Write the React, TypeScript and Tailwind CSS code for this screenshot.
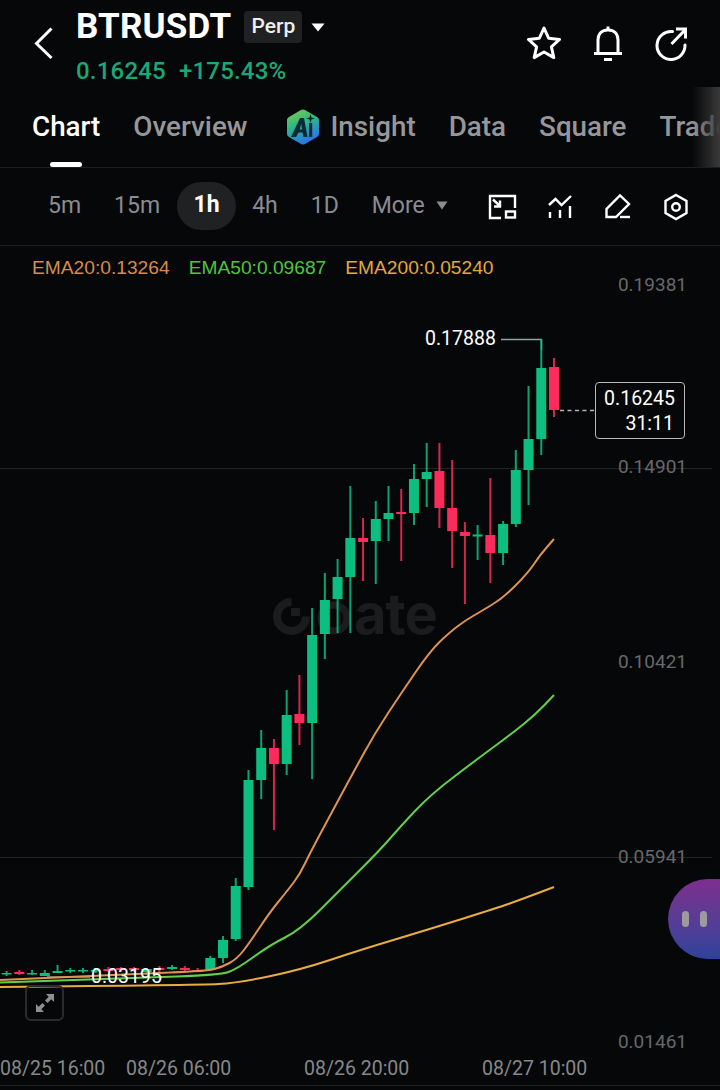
import React from "react";

type C = [number, number, number, number, number]; // x-index k, wickTop, wickBottom, bodyTop, bodyBottom
const G = "#0cbf80";
const R = "#fb2c5b";

const up: C[] = [
  [1, 339, 455, 368, 439], [2, 386, 505, 439, 470], [3, 450, 527, 470, 524], [4, 521, 565, 524, 553],
  [6, 525, 560, 534.5, 536.5], [10, 443, 507, 472, 479], [11, 464, 525, 479, 513], [13, 486, 541, 513, 519],
  [14, 501, 584, 519, 541], [16, 486, 633, 538, 577], [17, 559, 633, 577, 599], [18, 573, 659, 600, 634],
  [19, 608, 779, 635, 723], [21, 690, 775, 715, 764], [23, 730, 799, 748, 780], [24, 770, 890, 780, 887],
  [25, 878, 941, 886, 939], [26, 936, 963, 940, 958], [27, 956, 971, 958, 970],
  [30, 965, 970, 967, 969], [32, 968, 975, 969, 972], [36, 968, 973, 970, 971], [37, 968, 973, 970, 971],
  [38, 968, 973, 970, 971], [39, 965, 973, 971, 973], [40, 970, 976, 973, 976], [41, 970, 975, 973, 974], [43, 971, 976, 973, 974.5],
];
const down: C[] = [
  [0, 358, 417, 367, 410], [5, 478, 583, 535, 553], [7, 522, 604, 532, 536], [8, 460, 568, 508, 531],
  [9, 443, 528, 471, 508], [12, 489, 561, 512, 514], [15, 518, 581, 538, 542], [20, 675, 745, 714, 723],
  [22, 739, 830, 748, 764], [28, 968, 972, 970, 972], [29, 966, 972, 968, 970], [31, 966, 972, 968, 970],
  [33, 967, 972, 968, 970], [34, 967, 972, 968, 970], [35, 967, 972, 969, 971], [42, 970, 975, 972, 974],
];

type P = [number, number];
const ema20: P[] = [[0, 980], [133, 974], [207, 971], [222, 967], [237, 959], [250, 942], [270, 912], [288, 890], [300, 874], [310, 853], [340, 797], [353, 773], [375, 733], [400, 695], [430, 651], [450, 632], [466, 620], [480, 612], [503, 598], [528, 573], [540, 555], [554, 539]];
const ema50: P[] = [[0, 982.5], [133, 978], [220, 975], [237, 969], [270, 945], [300, 930], [340, 890], [380, 850], [400, 827], [430, 795], [480, 757], [510, 735], [535, 715], [554, 695]];
const ema200: P[] = [[0, 987], [200, 985], [237, 983], [300, 970], [360, 950], [430, 929], [500, 907], [525, 898], [554, 887]];

function smooth(p: P[]) {
  let d = `M${p[0][0]} ${p[0][1]}`;
  for (let i = 1; i < p.length - 1; i++) {
    const mx = (p[i][0] + p[i + 1][0]) / 2;
    const my = (p[i][1] + p[i + 1][1]) / 2;
    d += ` Q${p[i][0]} ${p[i][1]} ${mx} ${my}`;
  }
  const l = p[p.length - 1];
  return d + ` L${l[0]} ${l[1]}`;
}

function Candle({ c, color }: { c: C; color: string }) {
  const x = 554 - c[0] * 12.73;
  return (
    <g fill={color}>
      <rect x={x - 1} y={c[1]} width={2} height={c[2] - c[1]} opacity={0.85} />
      <rect x={x - 5} y={c[3]} width={10} height={Math.max(c[4] - c[3], 1.5)} />
    </g>
  );
}

function AiLogo() {
  return (
    <svg width="34" height="38" viewBox="0 0 34 38" className="shrink-0">
      <defs>
        <linearGradient id="aig" x1="0" y1="0" x2="0.4" y2="1">
          <stop offset="0" stopColor="#7fd03f" />
          <stop offset="0.5" stopColor="#2fb68a" />
          <stop offset="1" stopColor="#2a78e8" />
        </linearGradient>
      </defs>
      <path d="M15 2 Q17 1 19 2 L31 9 Q33 10 33 12 L33 26 Q33 28 31 29 L19 36 Q17 37 15 36 L3 29 Q1 28 1 26 L1 12 Q1 10 3 9 Z" fill="url(#aig)" />
      <path d="M5 29 L14 10 H18 L21.5 29 H17.5 L16.5 24.5 H12.5 L10 29 Z M13.8 21.5 H16 L15.2 15.5 Z" fill="#0a2a33" fillRule="evenodd" />
      <rect x="23" y="15" width="3.2" height="14" fill="#0a2a33" />
      <path d="M24.5 6 L25.5 9.5 L29 10.5 L25.5 11.5 L24.5 15 L23.5 11.5 L20 10.5 L23.5 9.5 Z" fill="#0a2a33" />
    </svg>
  );
}

function Caret({ w, h, color }: { w: number; h: number; color: string }) {
  return (
    <svg width={w} height={h} viewBox="0 0 14 9" preserveAspectRatio="none" className="shrink-0">
      <path d="M0.5 0.5 H13.5 L7 8.5 Z" fill={color} />
    </svg>
  );
}

const tabs = ["Data", "Square", "Trade"];

export default function App() {
  return (
    <div className="w-[720px] h-[1090px] overflow-hidden bg-[#060708] text-white flex flex-col font-['Roboto',sans-serif]">
      {/* header */}
      <div className="h-[87px] shrink-0 flex items-start pl-[33px] pr-[32px]">
        <svg width="22" height="34" viewBox="0 0 22 34" className="mt-[26px] shrink-0">
          <path d="M18.5 2.5 L3.5 17.5 L18.5 32" fill="none" stroke="#fff" strokeWidth="3" />
        </svg>
        <div className="ml-[21px] flex flex-col">
          <div className="flex items-center h-[54px]">
            <span className="text-[35px] leading-[40px] font-bold tracking-[0.2px]">BTRUSDT</span>
            <span className="ml-[13px] w-[58px] h-[32px] rounded-[4px] bg-[#202122] flex items-center justify-center text-[21px] font-medium text-[#eeeeee]">Perp</span>
            <span className="ml-[9px]"><Caret w={14} h={9} color="#ffffff" /></span>
          </div>
          <div className="flex gap-[13px] text-[24px] leading-[28px] font-medium text-[#1ba878] tracking-[0.2px] mt-[3px]">
            <span>0.16245</span>
            <span>+175.43%</span>
          </div>
        </div>
        <div className="ml-auto mt-[25px] flex items-center gap-[30px]">
          <svg width="36" height="36" viewBox="0 0 36 36">
            <path d="M18 3 L22.6 13.2 L33.6 14.4 L25.4 21.8 L27.8 32.6 L18 27 L8.2 32.6 L10.6 21.8 L2.4 14.4 L13.4 13.2 Z" fill="none" stroke="#fff" strokeWidth="3" strokeLinejoin="round" />
          </svg>
          <svg width="32" height="36" viewBox="0 0 32 36">
            <path d="M6 28 V15 C6 8.5 10 5 16 5 C22 5 26 8.5 26 15 V28" fill="none" stroke="#fff" strokeWidth="3" />
            <path d="M2 28.5 H30 M12 34.5 H20 M16 1.5 V4" fill="none" stroke="#fff" strokeWidth="3" />
          </svg>
          <svg width="34" height="36" viewBox="0 0 34 36">
            <path d="M18.5 6.6 A14 14 0 1 0 31 20" fill="none" stroke="#fff" strokeWidth="3" strokeLinecap="round" />
            <path d="M17.5 19 L31 5 M22 4 H31.5 V13.5" fill="none" stroke="#fff" strokeWidth="3" />
          </svg>
        </div>
      </div>

      {/* tabs */}
      <div className="relative h-[81px] shrink-0 border-b border-[#1d1e20] overflow-hidden">
        <div className="flex items-center h-[80px] pl-[32px] pb-[1px] text-[27.8px] font-medium text-[#96979b] whitespace-nowrap">
          <span className="text-white">Chart</span>
          <span className="ml-[33px]">Overview</span>
          <span className="ml-[39px]"><AiLogo /></span>
          <span className="ml-[10px]">Insight</span>
          {tabs.map((t) => (
            <span key={t} className="ml-[33px]">{t}</span>
          ))}
        </div>
        <div className="absolute left-[50px] bottom-0 w-[32px] h-[5px] rounded-full bg-white" />
        <div className="absolute right-0 top-0 bottom-0 w-[28px] bg-gradient-to-r from-[#06070800] to-[#3a3a3a]" />
      </div>

      {/* toolbar */}
      <div className="h-[78px] shrink-0 border-b border-[#1d1e20] flex items-center text-[23px] text-[#8b8c90] whitespace-nowrap">
        <span className="ml-[48px]">5m</span>
        <span className="ml-[33px]">15m</span>
        <span className="ml-[17px] w-[59px] h-[48px] -mt-[2px] rounded-full bg-[#202122] flex items-center justify-center text-white font-bold">1h</span>
        <span className="ml-[16px]">4h</span>
        <span className="ml-[33px]">1D</span>
        <span className="ml-[33px]">More</span>
        <span className="ml-[11px] -mt-[3px]"><Caret w={12} h={9} color="#8b8c90" /></span>
        <svg width="200" height="32" viewBox="488 190 200 32" className="ml-[40px] shrink-0" fill="none" stroke="#fff" strokeWidth="2.4">
          <path d="M515 207 V195 H490 V217 H501" />
          <rect x="506" y="210.5" width="9" height="6" />
          <path d="M493 198.5 L500 205 M500 199.5 V205.5 H494" />
          <path d="M549 204 L555.5 198 L561.5 204 L571 195" />
          <path d="M550 211 V217 M560 209 V217 M570 205 V217" />
          <path d="M606.5 216 V208 L620 194.5 L629 203 L616 216 Z" />
          <path d="M620 216 H630" />
          <path d="M676 194 L686.5 200 V212 L676 218 L665.5 212 V200 Z" />
          <circle cx="676" cy="206" r="3.8" />
        </svg>
      </div>

      {/* chart */}
      <div className="relative flex-1 overflow-hidden">
        <svg width="720" height="844" viewBox="0 246 720 844" className="absolute inset-0">
          <path d="M0 468.5 H712 M0 857.5 H712 M0 1085.5 H720" stroke="#222325" strokeWidth="1" />
          <path d="M291.5 602 A14.5 14.5 0 1 0 306 616.5" fill="none" stroke="#1b1c1e" strokeWidth="8" />
          <rect x="291" y="608" width="9" height="8" fill="#1b1c1e" />
          <circle cx="334" cy="618" r="13" fill="none" stroke="#1b1c1e" strokeWidth="7" />
          <path d="M501 339.5 H541.5 V350" fill="none" stroke="#8fa39b" strokeWidth="1.4" />
          <path d="M47 977 H90" stroke="#cfcfcf" strokeWidth="1" />
          <text x="354" y="634" fontSize="56" fontWeight="700" fontFamily="Inter, sans-serif" fill="#1b1c1e" letterSpacing="-1">ate</text>
          {up.map((c) => <Candle key={c[0]} c={c} color={G} />)}
          {down.map((c) => <Candle key={c[0]} c={c} color={R} />)}
          <path d={smooth(ema200)} fill="none" stroke="#e9ad3f" strokeWidth="2" />
          <path d={smooth(ema50)} fill="none" stroke="#63cf4a" strokeWidth="2" />
          <path d={smooth(ema20)} fill="none" stroke="#dd9450" strokeWidth="2" />
          <path d="M560 410.5 H595" stroke="#b5b5b5" strokeWidth="1.4" strokeDasharray="4 3.5" />
        </svg>

        {/* legend */}
        <div className="absolute left-[32px] top-[11px] flex gap-[19px] text-[19.2px] leading-[22px] font-['Liberation_Sans',sans-serif]">
          <span className="text-[#d68b4c]">EMA20:0.13264</span>
          <span className="text-[#4fc43f]">EMA50:0.09687</span>
          <span className="text-[#e3a83c]">EMA200:0.05240</span>
        </div>

        {/* price axis */}
        <span className="absolute right-[33px] top-[27px] text-[19px] leading-[24px] text-[#67686b]">0.19381</span>
        <span className="absolute right-[33px] top-[209px] text-[19px] leading-[24px] text-[#67686b]">0.14901</span>
        <span className="absolute right-[33px] top-[404px] text-[19px] leading-[24px] text-[#67686b]">0.10421</span>
        <span className="absolute right-[33px] top-[599px] text-[19px] leading-[24px] text-[#67686b]">0.05941</span>
        <span className="absolute right-[33px] top-[784px] text-[19px] leading-[24px] text-[#67686b]">0.01461</span>

        {/* extremes */}
        <span className="absolute left-[425px] top-[81px] text-[19.5px] leading-[24px] text-white">0.17888</span>
        <span className="absolute left-[91px] top-[719px] text-[19.5px] leading-[24px] text-white">0.03195</span>

        {/* current price */}
        <div className="absolute left-[595px] top-[136px] w-[90px] h-[57px] border border-[#b8b8b8] rounded-[4px] bg-[#060708] flex flex-col items-end justify-center pr-[9px] text-[19.5px] leading-[25px]">
          <span>0.16245</span>
          <span className="pr-[1px]">31:11</span>
        </div>

        {/* fullscreen */}
        <div className="absolute left-[25px] top-[739px] w-[39px] h-[36px] border-2 border-[#2a2b2d] rounded-[6px] flex items-center justify-center">
          <svg width="20" height="20" viewBox="0 0 20 20" fill="#8f8f8f">
            <path d="M11 1 H19 V9 L16.3 6.3 L12.5 10 L10 7.5 L13.7 3.7 Z" />
            <path d="M9 19 H1 V11 L3.7 13.7 L7.5 10 L10 12.5 L6.3 16.3 Z" />
          </svg>
        </div>

        {/* dates */}
        <div className="absolute left-0 top-[811px] flex text-[19.5px] leading-[24px] text-[#87888b] whitespace-nowrap">
          <span className="w-[126px]">08/25 16:00</span>
          <span className="w-[178px]">08/26 06:00</span>
          <span className="w-[178px]">08/26 20:00</span>
          <span>08/27 10:00</span>
        </div>

        {/* assistant bubble */}
        <div className="absolute left-[668px] top-[633px] w-[52px] h-[80px] rounded-l-[40px] bg-gradient-to-b from-[#7c2e8d] to-[#2c429c] flex items-center pl-[14px] gap-[11px]">
          <span className="w-[7px] h-[16px] rounded-full bg-[#9b9ba0]" />
          <span className="w-[7px] h-[16px] rounded-full bg-[#9b9ba0]" />
        </div>
      </div>
    </div>
  );
}
